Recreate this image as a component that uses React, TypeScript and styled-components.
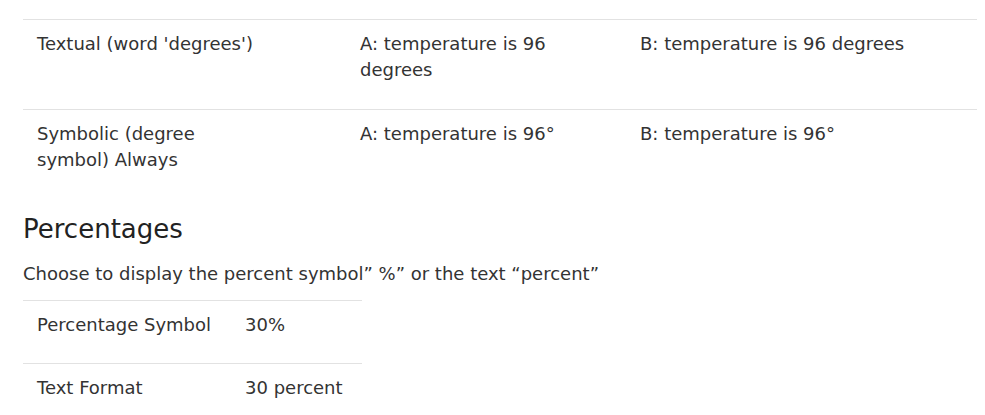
import React from "react";
import styled, { createGlobalStyle } from "styled-components";

const Global = createGlobalStyle`
  html, body { margin: 0; padding: 0; background: #fff; }
  body { font-family: "DejaVu Sans", Verdana, sans-serif; color: #333; }
`;

const Page = styled.div`
  padding: 19px 8px 0 23px;
  width: 954px;
`;

const Table = styled.div<{ $width: number }>`
  display: flex;
  flex-direction: column;
  width: ${(p) => p.$width}px;
`;

const Row = styled.div<{ $cols: string }>`
  display: grid;
  grid-template-columns: ${(p) => p.$cols};
  border-top: 1px solid #e2e2e2;
`;

const Cell = styled.div<{ $max?: number; $pb: number }>`
  padding: 11px 14px ${(p) => p.$pb}px 14px;
  font-size: 18px;
  line-height: 26px;
  color: #333;
  & > span {
    display: block;
    max-width: ${(p) => (p.$max ? `${p.$max}px` : "none")};
  }
`;

const Heading = styled.h2`
  margin: 13px 0 0 0;
  font-size: 26px;
  font-weight: normal;
  line-height: 34px;
  color: #222;
`;

const Para = styled.p`
  margin: 15px 0 13px 0;
  font-size: 18px;
  line-height: 26px;
  color: #333;
`;

const degreeRows = [
  ["Textual (word 'degrees')", "A: temperature is 96 degrees", "B: temperature is 96 degrees"],
  ["Symbolic (degree symbol) Always", "A: temperature is 96°", "B: temperature is 96°"],
];

const degreeMax = [225, 240, undefined];

const pctRows = [
  ["Percentage Symbol", "30%"],
  ["Text Format", "30 percent"],
];

export default function App() {
  return (
    <>
      <Global />
      <Page>
        <Table $width={954}>
          {degreeRows.map((r, i) => (
            <Row key={i} $cols="323px 280px 1fr">
              {r.map((t, j) => (
                <Cell key={j} $max={degreeMax[j]} $pb={26}>
                  <span>{t}</span>
                </Cell>
              ))}
            </Row>
          ))}
        </Table>
        <Heading>Percentages</Heading>
        <Para>Choose to display the percent symbol” %” or the text “percent”</Para>
        <Table $width={339}>
          {pctRows.map((r, i) => (
            <Row key={i} $cols="208px 1fr">
              {r.map((t, j) => (
                <Cell key={j} $pb={25}>
                  <span>{t}</span>
                </Cell>
              ))}
            </Row>
          ))}
        </Table>
      </Page>
    </>
  );
}
